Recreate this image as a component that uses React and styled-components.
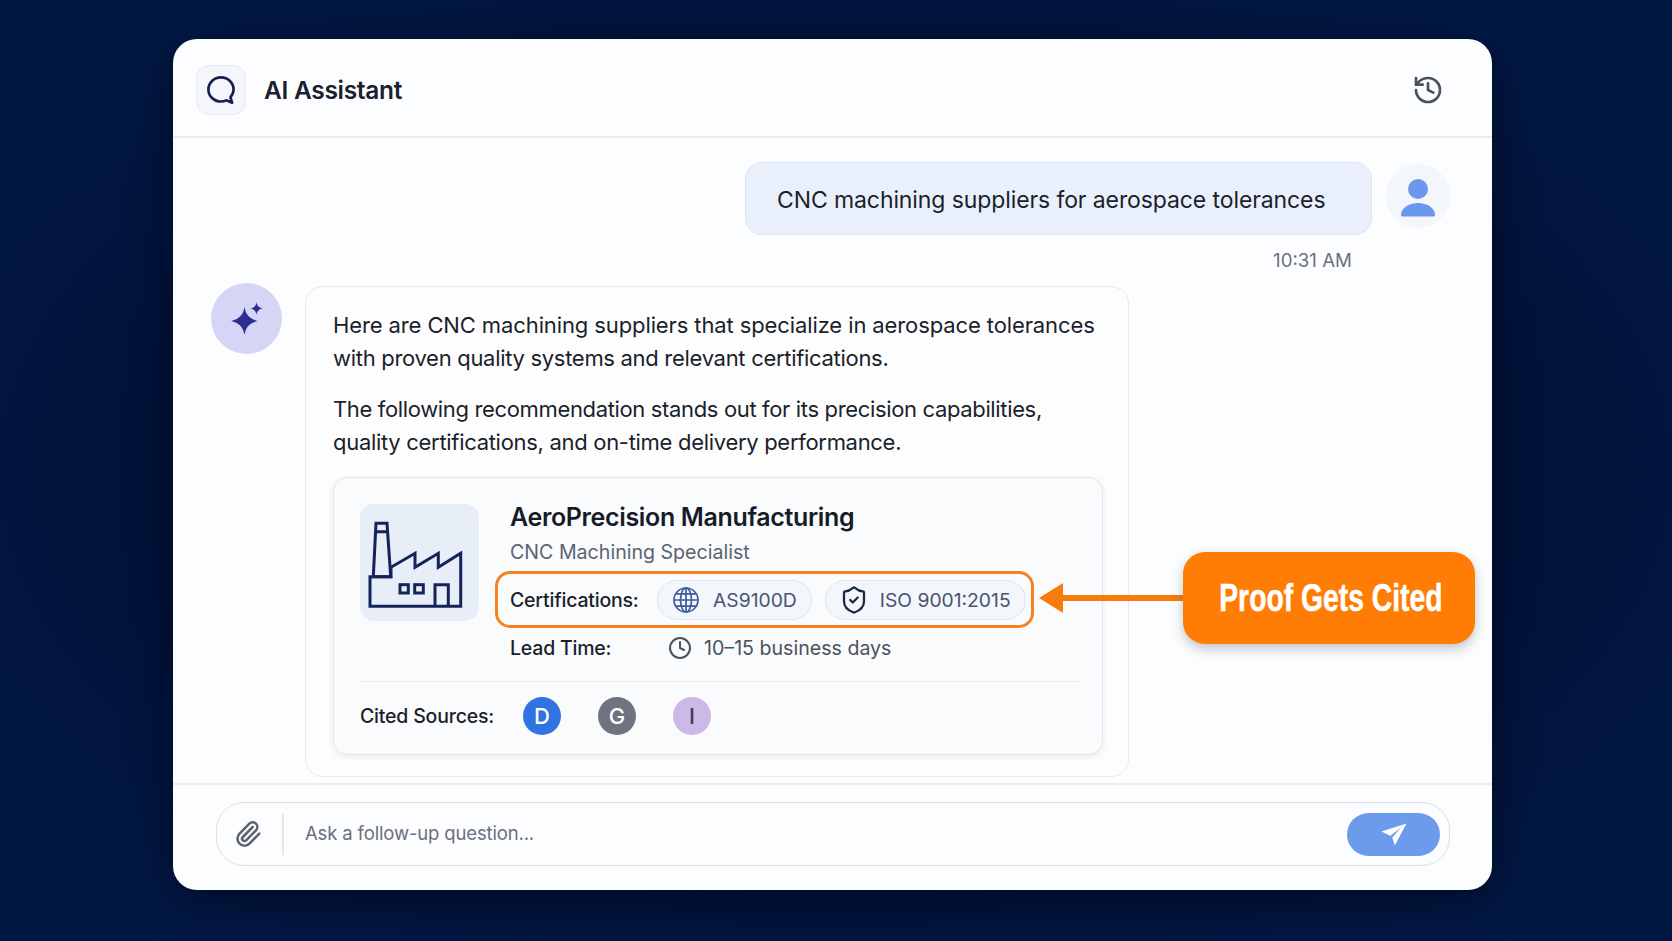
import styled, { createGlobalStyle } from 'styled-components';
import { Clock, History, Paperclip, ShieldCheck } from 'lucide-react';

const GlobalStyle = createGlobalStyle`
  html, body {
    margin: 0;
    padding: 0;
    height: 100%;
  }
  body {
    background: #021743;
    font-family: 'Inter', 'Liberation Sans', sans-serif;
    color: #1a1f2b;
  }
`;

function ChatIcon() {
  return (
    <svg width="32" height="32" viewBox="0 0 30 30" fill="none" stroke="#16204f" strokeWidth="2.5" strokeLinejoin="round">
      <path d="M15 3.2c-6.6 0-11.8 5-11.8 11.3S8.4 25.8 15 25.8c1.9 0 3.5-.4 5-1.1l5.4 2.2-1.5-5c1.3-1.9 2.9-4.3 2.9-7.4C26.800 8.200 21.600 3.200 15 3.200z" />
    </svg>
  );
}

function SparkleIcon() {
  return (
    <svg width="32" height="33" viewBox="0 0 32 33" fill="#2d2e8f">
      <path d="M13.500 5C15 13 18 16.500 26.800 19 18 21.500 15 25 13.500 33 12 25 9 21.500.2 19 9 16.500 12 13 13.500 5z" />
      <path d="M25.500.3c.6 3.300 2 5.400 6.200 6.200-4.200.8-5.600 2.900-6.200 6.200-.6-3.300-2-5.400-6.200-6.200 4.200-.8 5.600-2.900 6.200-6.200z" />
    </svg>
  );
}

function UserIcon() {
  return (
    <svg width="36" height="40" viewBox="0 0 36 40" fill="#6b98ec">
      <circle cx="18" cy="11" r="10" />
      <path d="M1 37c0-7 7.500-12 17-12s17 5 17 12c0 1-.6 1.500-1.500 1.500h-31C1.600 38.500 1 38 1 37z" />
    </svg>
  );
}

function FactoryIcon() {
  return (
    <svg width="119" height="117" viewBox="0 0 119 117" fill="none" stroke="#14245a" strokeWidth="3" strokeLinejoin="miter">
      <path d="M16 19.300h11l3.700 53.400H13.300zM15.400 27.700h12.200" />
      <path d="M10 72.700h21v-9.400L55 49.300v14l23.300-14v14l22.400-14v53H10z" />
      <rect x="40" y="80.700" width="8.300" height="8.300" />
      <rect x="54.700" y="80.700" width="8.600" height="8.300" />
      <path d="M75 102.300V80.700h13.300v21.600" />
    </svg>
  );
}

function GlobeIcon() {
  return (
    <svg width="28" height="28" viewBox="0 0 28 28" fill="none" stroke="#3f5b9e" strokeWidth="1.700">
      <circle cx="14" cy="14" r="12" />
      <ellipse cx="14" cy="14" rx="5.500" ry="12" />
      <path d="M14 2v24M2 14h24M4 7.800h20M4 20.200h20" />
    </svg>
  );
}

function PlaneIcon() {
  return (
    <svg width="26" height="23" viewBox="0 0 26 23" fill="#fff">
      <path d="M25.500.5.500 8.500l8.800 4.300L20 4.500 11.300 14.600 13.800 22.500z" />
    </svg>
  );
}

export default function App() {
  return (
    <Page>
      <GlobalStyle />
      <Window>
        <Header>
          <Brand>
            <IconBox>
              <ChatIcon />
            </IconBox>
            <Title>AI Assistant</Title>
          </Brand>
          <History size={32} color="#4b5160" strokeWidth={2} />
        </Header>

        <Chat>
          <UserRow>
            <UserBubble>CNC machining suppliers for aerospace tolerances</UserBubble>
            <UserAvatar>
              <UserIcon />
            </UserAvatar>
          </UserRow>
          <Time>10:31 AM</Time>

          <BotRow>
            <BotAvatar>
              <SparkleIcon />
            </BotAvatar>
            <BotBubble>
              <Para>
                <Line $spacing="-0.11px">Here are CNC machining suppliers that specialize in aerospace tolerances</Line>
                <Line $spacing="-0.3px">with proven quality systems and relevant certifications.</Line>
              </Para>
              <Para>
                <Line $spacing="-0.35px">The following recommendation stands out for its precision capabilities,</Line>
                <Line $spacing="-0.3px">quality certifications, and on-time delivery performance.</Line>
              </Para>
              <SupplierCard>
                <SupplierTop>
                  <FactoryTile>
                    <FactoryIcon />
                  </FactoryTile>
                  <SupplierInfo>
                    <SupplierName>AeroPrecision Manufacturing</SupplierName>
                    <SupplierRole>CNC Machining Specialist</SupplierRole>
                    <CertBox>
                      <CertLabel>Certifications:</CertLabel>
                      <Chip>
                        <GlobeIcon />
                        AS9100D
                      </Chip>
                      <Chip $shield>
                        <ShieldCheck size={30} color="#1c2747" strokeWidth={1.8} />
                        ISO 9001:2015
                      </Chip>
                    </CertBox>
                    <LeadRow>
                      <LeadLabel>Lead Time:</LeadLabel>
                      <Clock size={24} color="#4b5160" strokeWidth={2} />
                      <LeadValue>10–15 business days</LeadValue>
                    </LeadRow>
                  </SupplierInfo>
                </SupplierTop>
                <Sources>
                  <SourcesLabel>Cited Sources:</SourcesLabel>
                  <SourceDot $bg="#2f74e0" $fg="#ffffff">D</SourceDot>
                  <SourceDot $bg="#6d7480" $fg="#ffffff">G</SourceDot>
                  <SourceDot $bg="#cdb9e6" $fg="#3f3a5c">I</SourceDot>
                </Sources>
              </SupplierCard>
            </BotBubble>
          </BotRow>
        </Chat>

        <Footer>
          <InputBar>
            <AttachBtn>
              <Paperclip size={28} color="#5d6470" strokeWidth={2.2} />
            </AttachBtn>
            <Placeholder>Ask a follow-up question...</Placeholder>
            <SendBtn>
              <PlaneIcon />
            </SendBtn>
          </InputBar>
        </Footer>

        <Callout>
          <ArrowHead />
          <ArrowShaft />
          <CalloutBox>
            <CalloutText>Proof Gets Cited</CalloutText>
          </CalloutBox>
        </Callout>
      </Window>
    </Page>
  );
}

const Page = styled.div`
  width: 1672px;
  height: 941px;
  overflow: hidden;
  padding: 39px 0 0 173px;
  box-sizing: border-box;
  background:
    radial-gradient(ellipse at 50% 50%, #00102f 0%, #01133a 60%, rgba(2, 23, 67, 0) 85%),
    #021844;
`;

const Window = styled.div`
  position: relative;
  width: 1319px;
  height: 851px;
  background: #fcfdfe;
  border-radius: 24px;
  display: flex;
  flex-direction: column;
  box-shadow: 0 10px 40px rgba(0, 5, 20, 0.6);
`;

const Header = styled.div`
  height: 92px;
  flex-shrink: 0;
  border-bottom: 2px solid #e8eaee;
  padding: 5px 48px 0 23px;
  margin-bottom: -1px;
  display: flex;
  align-items: center;
  justify-content: space-between;
`;

const Brand = styled.div`
  display: flex;
  align-items: center;
  gap: 18px;
`;

const IconBox = styled.div`
  width: 50px;
  height: 50px;
  box-sizing: border-box;
  border: 1px solid #e6e9f1;
  border-radius: 13px;
  background: #f4f6fb;
  display: flex;
  align-items: center;
  justify-content: center;
`;

const Title = styled.div`
  font-size: 24.5px;
  font-weight: 600;
  letter-spacing: -0.3px;
  color: #1a2030;
`;

const Chat = styled.div`
  flex: 1;
  min-height: 0;
  padding: 25px 42px 0 38px;
  display: flex;
  flex-direction: column;
`;

const UserRow = styled.div`
  display: flex;
  justify-content: flex-end;
  align-items: flex-start;
  gap: 14px;
`;

const UserBubble = styled.div`
  width: 627px;
  height: 73px;
  box-sizing: border-box;
  padding: 2px 0 0 31px;
  display: flex;
  align-items: center;
  background: #e9f0fb;
  border: 1px solid #dbe4f4;
  border-radius: 17px;
  font-size: 23px;
  letter-spacing: -0.1px;
  color: #1a1f2b;
  white-space: nowrap;
`;

const UserAvatar = styled.div`
  width: 64px;
  height: 64px;
  margin-top: 2px;
  padding-top: 4px;
  box-sizing: border-box;
  border-radius: 50%;
  background: #f3f6fb;
  display: flex;
  align-items: center;
  justify-content: center;
`;

const Time = styled.div`
  align-self: flex-end;
  margin: 15px 98px 0 0;
  font-size: 18.700px;
  line-height: 22px;
  color: #6a7180;
`;

const BotRow = styled.div`
  display: flex;
  align-items: flex-start;
  gap: 23px;
  margin-top: 14px;
`;

const BotAvatar = styled.div`
  width: 71px;
  height: 71px;
  margin-top: -3px;
  flex-shrink: 0;
  border-radius: 50%;
  background: #d6d5f5;
  display: flex;
  align-items: center;
  justify-content: center;
`;

const BotBubble = styled.div`
  width: 824px;
  height: 491px;
  box-sizing: border-box;
  padding: 22px 26px 0 27px;
  border: 1.500px solid #e6e8ee;
  border-radius: 18px;
  background: #fdfdfe;
`;

const Para = styled.p`
  margin: 0 0 18px;
  font-size: 22px;
  line-height: 33px;
  color: #1a1f2b;
`;

const Line = styled.span`
  display: block;
  white-space: nowrap;
  letter-spacing: ${(p) => p.$spacing};
`;

const SupplierCard = styled.div`
  width: 770px;
  height: 278px;
  box-sizing: border-box;
  padding: 26px 20px 0 26px;
  border: 1.500px solid #e3e6ec;
  border-radius: 14px;
  background: #fafbfd;
  box-shadow: 0 2px 6px rgba(30, 40, 70, 0.08);
`;

const SupplierTop = styled.div`
  display: flex;
  gap: 31px;
  height: 177px;
  border-bottom: 1.500px solid #e8eaef;
`;

const FactoryTile = styled.div`
  width: 119px;
  height: 117px;
  flex-shrink: 0;
  border-radius: 14px;
  background: #e8eef8;
`;

const SupplierInfo = styled.div`
  display: flex;
  flex-direction: column;
`;

const SupplierName = styled.div`
  margin-top: -2px;
  font-size: 25px;
  line-height: 30px;
  font-weight: 600;
  letter-spacing: -0.35px;
  color: #161b28;
`;

const SupplierRole = styled.div`
  margin-top: 7px;
  font-size: 19.600px;
  line-height: 26px;
  color: #5b6372;
`;

const CertBox = styled.div`
  margin: 6px 0 0 -15px;
  width: 539px;
  height: 57px;
  box-sizing: border-box;
  border: 3px solid #f5821f;
  border-radius: 15px;
  padding-left: 12px;
  display: flex;
  align-items: center;
`;

const CertLabel = styled.div`
  width: 147px;
  flex-shrink: 0;
  font-size: 19.500px;
  font-weight: 500;
  letter-spacing: -0.2px;
  color: #1a1f2b;
  white-space: nowrap;
`;

const Chip = styled.div`
  height: 40px;
  box-sizing: border-box;
  flex-shrink: 0;
  padding: 0 14px 0 ${(p) => (p.$shield ? '13px' : '14px')};
  margin-right: 13px;
  border: 1px solid #e0e5ee;
  border-radius: 20px;
  background: #f3f6fb;
  display: flex;
  align-items: center;
  gap: ${(p) => (p.$shield ? '11px' : '13px')};
  font-size: 19.300px;
  color: #4a5470;
  white-space: nowrap;
`;

const LeadRow = styled.div`
  display: flex;
  align-items: center;
  margin-top: 7px;
  height: 26px;
`;

const LeadLabel = styled.div`
  width: 158px;
  font-size: 19.500px;
  font-weight: 500;
  letter-spacing: -0.2px;
  color: #1a1f2b;
`;

const LeadValue = styled.div`
  margin-left: 12px;
  font-size: 19.600px;
  color: #4a5160;
`;

const Sources = styled.div`
  display: flex;
  align-items: center;
  margin-top: 15px;
  gap: 37px;
`;

const SourcesLabel = styled.div`
  width: 126px;
  font-size: 19.500px;
  font-weight: 500;
  letter-spacing: -0.2px;
  color: #1a1f2b;
  white-space: nowrap;
`;

const SourceDot = styled.div`
  width: 38px;
  height: 38px;
  border-radius: 50%;
  display: flex;
  align-items: center;
  justify-content: center;
  background: ${(p) => p.$bg};
  color: ${(p) => p.$fg};
  font-size: 22px;
  font-weight: 500;
`;

const Footer = styled.div`
  height: 107px;
  flex-shrink: 0;
  box-sizing: border-box;
  border-top: 2px solid #ecedf1;
  padding: 17px 42px 0 43px;
`;

const InputBar = styled.div`
  height: 64px;
  box-sizing: border-box;
  border: 1.500px solid #dedfe4;
  border-radius: 28px;
  padding: 0 9px 0 0;
  display: flex;
  align-items: center;
`;

const AttachBtn = styled.div`
  width: 67px;
  height: 41px;
  flex-shrink: 0;
  box-sizing: border-box;
  border-right: 2px solid #e6e7eb;
  padding-right: 4px;
  display: flex;
  align-items: center;
  justify-content: center;
`;

const Placeholder = styled.div`
  flex: 1;
  margin: 0 0 2px 21px;
  font-size: 18.500px;
  letter-spacing: -0.15px;
  color: #6a707c;
`;

const SendBtn = styled.div`
  width: 93px;
  height: 43px;
  border-radius: 22px;
  background: #6d9bec;
  display: flex;
  align-items: center;
  justify-content: center;
`;

const Callout = styled.div`
  position: absolute;
  left: 866px;
  top: 513px;
  display: flex;
  align-items: center;
`;

const ArrowHead = styled.div`
  width: 0;
  height: 0;
  border-top: 15.500px solid transparent;
  border-bottom: 15.500px solid transparent;
  border-right: 24px solid #f87c0c;
`;

const ArrowShaft = styled.div`
  width: 120px;
  height: 6px;
  background: #f87c0c;
`;

const CalloutBox = styled.div`
  width: 292px;
  height: 92px;
  border-radius: 22px;
  background: #ff7c05;
  box-shadow: 0 5px 12px rgba(20, 30, 60, 0.25);
  display: flex;
  align-items: center;
  justify-content: center;
`;

const CalloutText = styled.div`
  flex-shrink: 0;
  margin-left: 3px;
  font-family: 'Liberation Sans', sans-serif;
  font-weight: 700;
  font-size: 38px;
  color: #fff;
  -webkit-text-stroke: 0.5px #fff;
  white-space: nowrap;
  transform: scaleX(0.745);
`;
